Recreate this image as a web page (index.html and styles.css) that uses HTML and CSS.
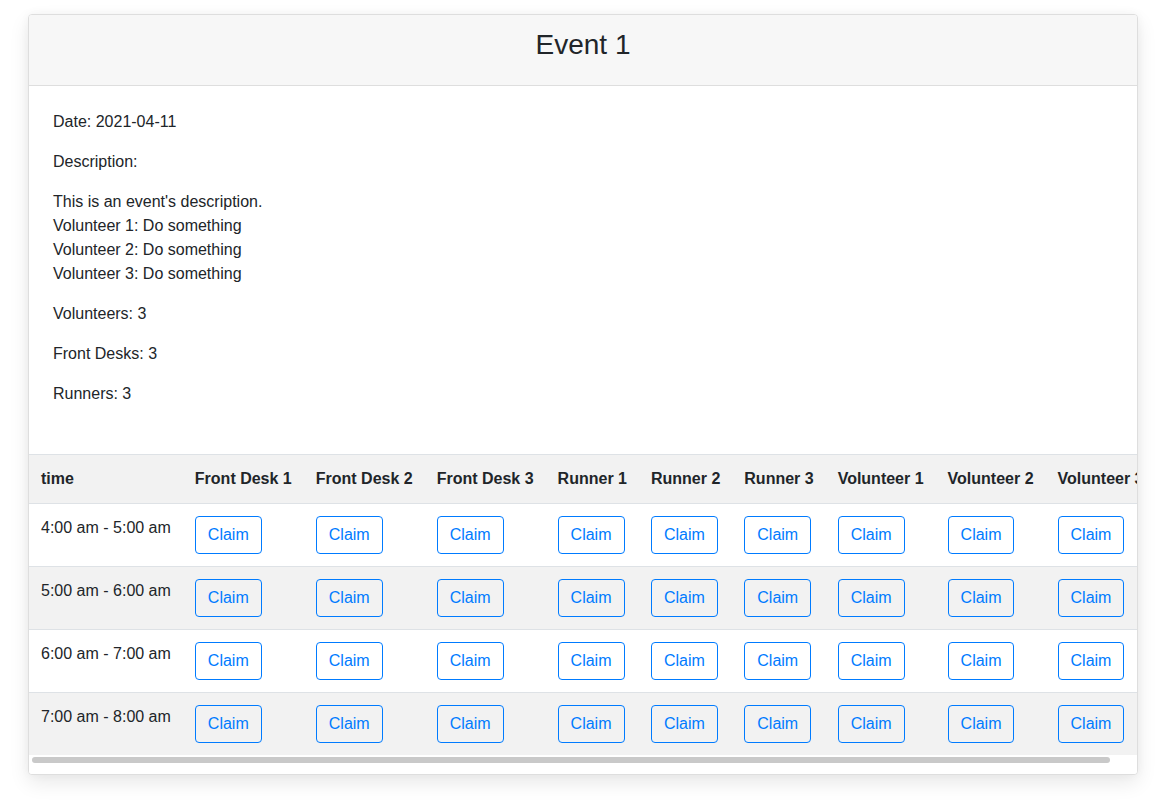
FILE: index.html
```html
<!DOCTYPE html>
<html>
<head>
<meta charset="utf-8">
<link rel="stylesheet" href="styles.css">
</head>
<body>
<div class="page">
  <div class="card">
    <div class="card-header"><h3 class="title">Event 1</h3></div>
    <div class="card-body">
      <p>Date: 2021-04-11</p>
      <p>Description:</p>
      <p>This is an event's description.<br>Volunteer 1: Do something<br>Volunteer 2: Do something<br>Volunteer 3: Do something</p>
      <p>Volunteers: 3</p>
      <p>Front Desks: 3</p>
      <p>Runners: 3</p>
    </div>
    <div class="table-wrap">
      <table class="shifts">
        <thead>
          <tr>
            <th>time</th><th>Front Desk 1</th><th>Front Desk 2</th><th>Front Desk 3</th><th>Runner 1</th><th>Runner 2</th><th>Runner 3</th><th>Volunteer 1</th><th>Volunteer 2</th><th>Volunteer 3</th>
          </tr>
        </thead>
        <tbody>
          <tr>
            <td>4:00 am - 5:00 am</td>
            <td><button class="btn">Claim</button></td><td><button class="btn">Claim</button></td><td><button class="btn">Claim</button></td><td><button class="btn">Claim</button></td><td><button class="btn">Claim</button></td><td><button class="btn">Claim</button></td><td><button class="btn">Claim</button></td><td><button class="btn">Claim</button></td><td><button class="btn">Claim</button></td>
          </tr>
          <tr>
            <td>5:00 am - 6:00 am</td>
            <td><button class="btn">Claim</button></td><td><button class="btn">Claim</button></td><td><button class="btn">Claim</button></td><td><button class="btn">Claim</button></td><td><button class="btn">Claim</button></td><td><button class="btn">Claim</button></td><td><button class="btn">Claim</button></td><td><button class="btn">Claim</button></td><td><button class="btn">Claim</button></td>
          </tr>
          <tr>
            <td>6:00 am - 7:00 am</td>
            <td><button class="btn">Claim</button></td><td><button class="btn">Claim</button></td><td><button class="btn">Claim</button></td><td><button class="btn">Claim</button></td><td><button class="btn">Claim</button></td><td><button class="btn">Claim</button></td><td><button class="btn">Claim</button></td><td><button class="btn">Claim</button></td><td><button class="btn">Claim</button></td>
          </tr>
          <tr>
            <td>7:00 am - 8:00 am</td>
            <td><button class="btn">Claim</button></td><td><button class="btn">Claim</button></td><td><button class="btn">Claim</button></td><td><button class="btn">Claim</button></td><td><button class="btn">Claim</button></td><td><button class="btn">Claim</button></td><td><button class="btn">Claim</button></td><td><button class="btn">Claim</button></td><td><button class="btn">Claim</button></td>
          </tr>
        </tbody>
      </table>
    </div>
    <div class="scrollbar"><div class="thumb"></div></div>
  </div>
</div>
</body>
</html>
```
FILE: styles.css
```css
html, body {
  margin: 0;
  padding: 0;
  background: #fff;
}
body {
  font-family: "Liberation Sans", Arial, sans-serif;
  font-size: 16px;
  line-height: 24px;
  color: #212529;
}
.page {
  padding: 14px 28px 40px 28px;
}
.card {
  width: 1110px;
  box-sizing: border-box;
  border: 1px solid #dedede;
  border-radius: 4px;
  background: #fff;
  box-shadow: 0 8px 20px rgba(0, 0, 0, 0.09), 0 0 10px rgba(0, 0, 0, 0.04);
  overflow: hidden;
}
.card-header {
  background: #f7f7f7;
  border-bottom: 1px solid #dedede;
  padding: 13px 20px 23px;
  text-align: center;
}
.title {
  margin: 0;
  font-size: 28px;
  line-height: 34px;
  font-weight: 400;
}
.card-body {
  padding: 24px 24px 32px;
}
.card-body p {
  margin: 0 0 16px;
}
.table-wrap {
  overflow-x: auto;
  scrollbar-width: none;
}
.table-wrap::-webkit-scrollbar {
  display: none;
}
.scrollbar {
  height: 19px;
  box-sizing: border-box;
  padding: 2px 3px;
  background: #fff;
}
.thumb {
  width: 1078px;
  height: 6px;
  border-radius: 3px;
  background: #c9c9c9;
}
.shifts {
  border-collapse: collapse;
  width: 100%;
}
.shifts th,
.shifts td {
  padding: 12px;
  text-align: left;
  vertical-align: top;
  white-space: nowrap;
  border-top: 1px solid #dee2e6;
}
.shifts thead th {
  background: #f2f2f2;
  font-weight: 700;
  border-bottom: 1px solid #dee2e6;
}
.shifts tbody tr:nth-child(even) td {
  background: #f2f2f2;
}
.btn {
  font-family: inherit;
  font-size: 16px;
  line-height: 24px;
  padding: 6px 12px;
  color: #007bff;
  background: transparent;
  border: 1px solid #007bff;
  border-radius: 4px;
  cursor: pointer;
  display: inline-block;
}
```
